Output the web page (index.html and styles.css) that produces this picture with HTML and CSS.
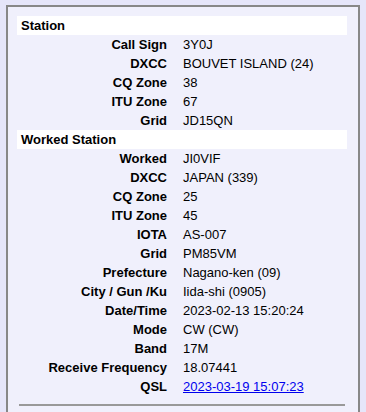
FILE: index.html
```html
<!DOCTYPE html>
<html>
<head>
<meta charset="utf-8">
<link rel="stylesheet" href="styles.css">
</head>
<body>
<div class="panel">
  <table class="info">
    <tr class="section"><th colspan="2">Station</th></tr>
    <tr><td class="label">Call Sign</td><td class="value">3Y0J</td></tr>
    <tr><td class="label">DXCC</td><td class="value">BOUVET ISLAND (24)</td></tr>
    <tr><td class="label">CQ Zone</td><td class="value">38</td></tr>
    <tr><td class="label">ITU Zone</td><td class="value">67</td></tr>
    <tr><td class="label">Grid</td><td class="value">JD15QN</td></tr>
    <tr class="section"><th colspan="2">Worked Station</th></tr>
    <tr><td class="label">Worked</td><td class="value">JI0VIF</td></tr>
    <tr><td class="label">DXCC</td><td class="value">JAPAN (339)</td></tr>
    <tr><td class="label">CQ Zone</td><td class="value">25</td></tr>
    <tr><td class="label">ITU Zone</td><td class="value">45</td></tr>
    <tr><td class="label">IOTA</td><td class="value">AS-007</td></tr>
    <tr><td class="label">Grid</td><td class="value">PM85VM</td></tr>
    <tr><td class="label">Prefecture</td><td class="value">Nagano-ken (09)</td></tr>
    <tr><td class="label">City / Gun /Ku</td><td class="value">Iida-shi (0905)</td></tr>
    <tr><td class="label">Date/Time</td><td class="value">2023-02-13 15:20:24</td></tr>
    <tr><td class="label">Mode</td><td class="value">CW (CW)</td></tr>
    <tr><td class="label">Band</td><td class="value">17M</td></tr>
    <tr><td class="label">Receive Frequency</td><td class="value">18.07441</td></tr>
    <tr><td class="label">QSL</td><td class="value"><a href="#">2023-03-19 15:07:23</a></td></tr>
  </table>
  <hr class="rule">
</div>
</body>
</html>
```
FILE: styles.css
```css
html, body {
  margin: 0;
  padding: 0;
}

body {
  background: #e6e6fa;
  font-family: "Liberation Sans", Arial, sans-serif;
  font-size: 13px;
  color: #000;
}

.panel {
  margin: 5px 0 0 6px;
  width: 354px;
  height: 420px;
  border: 2px solid #888;
  border-bottom: none;
  background: #f0f0fc;
  padding: 9px 0 0 9px;
  box-sizing: border-box;
}

.info {
  width: 330px;
  border-collapse: collapse;
}

.info td,
.info th {
  padding: 0;
  height: 19px;
  line-height: 19px;
  white-space: nowrap;
}

.section th {
  background: #fff;
  text-align: left;
  font-weight: bold;
  padding-left: 4px;
}

.label {
  width: 150px;
  text-align: right;
  font-weight: bold;
  padding-right: 8px !important;
}

.value {
  padding-left: 8px !important;
}

.value a {
  color: #0000ee;
  text-decoration: underline;
}

.rule {
  margin: 8px 0 0 2px;
  width: 326px;
  height: 0;
  border: none;
  border-top: 2px solid #999;
}
```
